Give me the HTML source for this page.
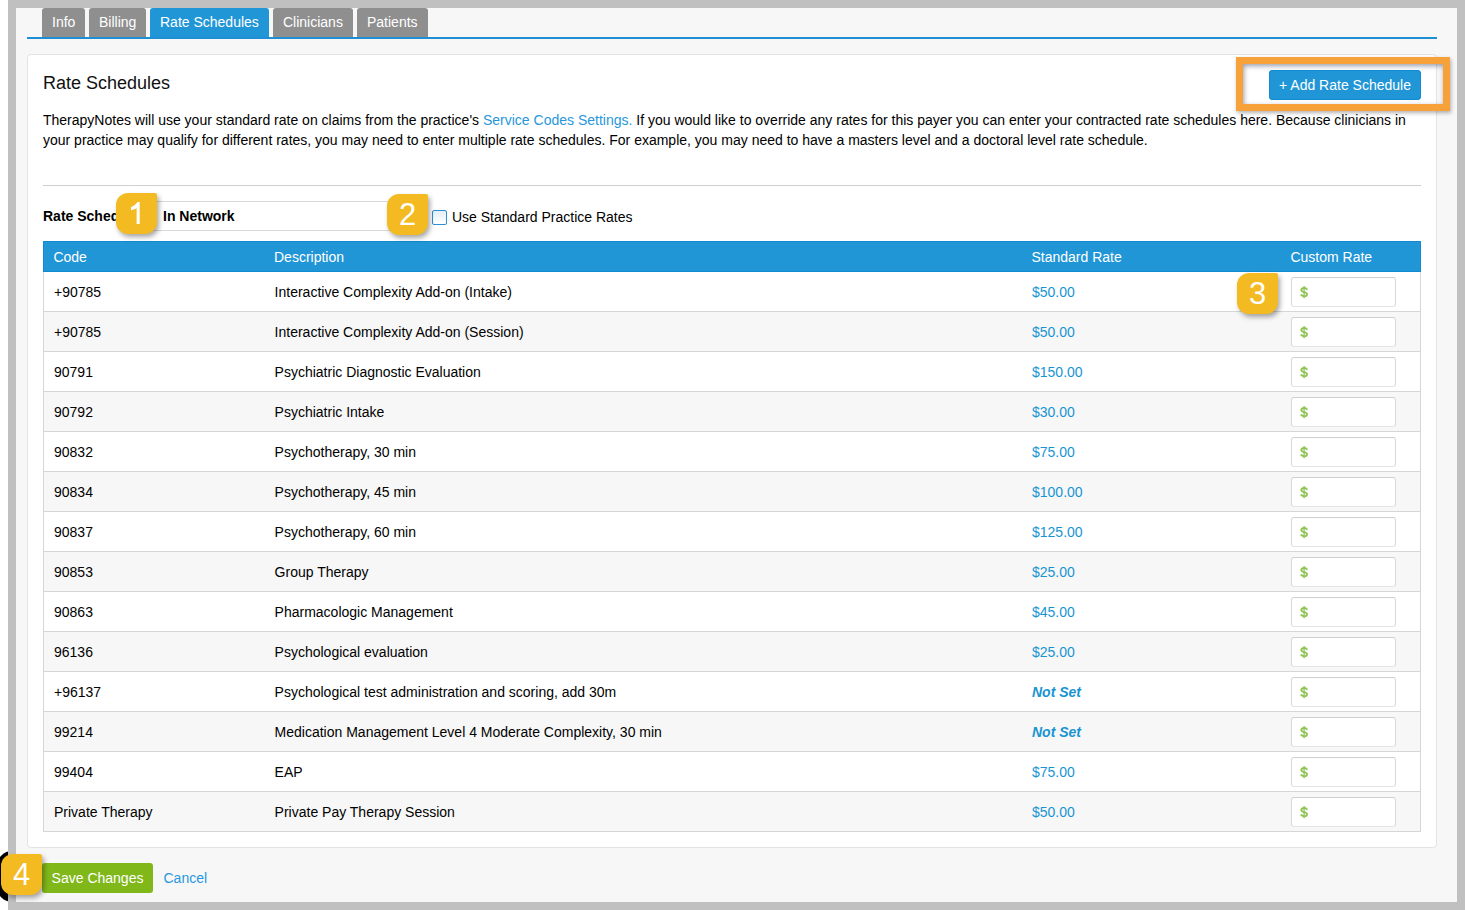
<!DOCTYPE html>
<html><head><meta charset="utf-8">
<style>
*{box-sizing:border-box;margin:0;padding:0}
html,body{width:1465px;height:910px;overflow:hidden;background:#fff;font-family:"Liberation Sans",sans-serif;font-size:14px;color:#000}
#blk{position:absolute;left:-3px;top:851px;width:48px;height:51px;background:#000;border-radius:15px}
#frame{position:absolute;left:8px;top:0;width:1457px;height:910px;background:#c0c0c0}
#page{position:absolute;left:16px;top:8px;width:1441px;height:894px;background:#f7f7f7}
.tab{position:absolute;top:8px;height:29px;line-height:28px;color:#fff;background:#8f8f8f;border-radius:3px 3px 0 0;padding:0 10px;font-size:14px;white-space:nowrap}
.tab.act{background:#2196d6}
#tabline{position:absolute;left:27px;top:37px;width:1410px;height:2px;background:#1e8fd3}
#panel{position:absolute;left:27px;top:54px;width:1410px;height:794px;background:#fff;border:1px solid #e3e3e3;border-radius:4px}
h2{position:absolute;left:43px;top:73px;font-size:18px;font-weight:normal;color:#111;line-height:20px}
#para{position:absolute;left:43px;top:110px;width:1380px;line-height:20px;font-size:14px;color:#000}
#para a{color:#2797dc;text-decoration:none}
#hr{position:absolute;left:43px;top:185px;width:1378px;height:1px;background:#cfcfcf}
#rslabel{position:absolute;left:43px;top:208px;font-weight:bold;font-size:14px;color:#000}
#rsinput{position:absolute;left:150px;top:201px;width:250px;height:30px;border:1px solid #d9d9d9;border-radius:3px;background:#fff}
#rsval{position:absolute;left:163px;top:208px;font-weight:bold;color:#000}
#chk{position:absolute;left:432px;top:210px;width:15px;height:15px;border:1px solid #2b8fd0;border-radius:2px;background:linear-gradient(#e4edf6,#fff)}
#chklbl{position:absolute;left:452px;top:209px;color:#000}
#addbtn{position:absolute;left:1269px;top:70px;width:152px;height:30px;background:#2196d6;color:#fff;border-radius:4px;text-align:center;line-height:31px;font-size:14px;box-shadow:inset 0 0 0 1px #118cd2}
#orange{position:absolute;left:1236px;top:57px;width:214px;height:54px;border:7px solid #f7a13a;box-shadow:1px 2px 4px rgba(0,0,0,.3),inset 1px 2px 5px rgba(30,40,70,.45)}
#thead{position:absolute;left:43px;top:241px;width:1378px;height:31px;background:#2196d6;border:1px solid #0e8bd2;color:#fff;line-height:30px}
.row{position:absolute;left:43px;width:1378px;height:40px;line-height:41px;box-shadow:inset 1px 0 #d6d6d6,inset -1px 0 #d6d6d6,inset 0 -1px #d6d6d6;background:#fff;color:#000}
.row.even{background:#f7f7f7}
.c1,.c2,.c3,.c4{position:absolute;top:0;white-space:nowrap}
.c1{left:11px}.c2{left:231.6px}.c3{left:989px;color:#1894d3}.c4{left:1248px}
#thead .c1{left:9.4px}#thead .c2{left:230px}#thead .c3{left:987.5px;color:#fff}#thead .c4{left:1246.4px}
.c3.ns{font-weight:bold;font-style:italic}
.ci{position:absolute;left:1248px;top:5px;width:105px;height:30px;border:1px solid;border-color:#cfcfcf #d8d8d8 #e4e4e4;border-radius:3px;background:#fff;color:#8cc152;font-weight:bold;padding-left:8px;line-height:28px}
.badge{position:absolute;width:41px;height:41px;background:#f3ba21;border-radius:12px 2px 12px 12px;color:#fff;font-size:31px;text-align:center;line-height:41px;box-shadow:2px 3px 5px rgba(0,0,0,.35)}
#save{position:absolute;left:42px;top:863px;width:111px;height:30px;background:#80b81a;color:#fff;border-radius:3px;text-align:center;line-height:31px}
#cancel{position:absolute;left:163.5px;top:870.3px;color:#2797dc}
</style></head><body>
<div id="blk"></div>
<div id="frame"></div>
<div id="page"></div>
<div class="tab" style="left:42px;width:43px">Info</div>
<div class="tab" style="left:89px;width:57px">Billing</div>
<div class="tab act" style="left:150px;width:119px">Rate Schedules</div>
<div class="tab" style="left:273px;width:80px">Clinicians</div>
<div class="tab" style="left:357px;width:71px">Patients</div>
<div id="tabline"></div>
<div id="panel"></div>
<h2>Rate Schedules</h2>
<div id="para">TherapyNotes will use your standard rate on claims from the practice's <a>Service Codes Settings.</a> If you would like to override any rates for this payer you can enter your contracted rate schedules here. Because clinicians in your practice may qualify for different rates, you may need to enter multiple rate schedules. For example, you may need to have a masters level and a doctoral level rate schedule.</div>
<div id="hr"></div>
<div id="rslabel">Rate Schedule</div>
<div id="rsinput"></div>
<div id="rsval">In Network</div>
<div id="chk"></div>
<div id="chklbl">Use Standard Practice Rates</div>
<div id="orange"></div>
<div id="addbtn">+ Add Rate Schedule</div>
<div id="thead"><span class="c1">Code</span><span class="c2">Description</span><span class="c3">Standard Rate</span><span class="c4">Custom Rate</span></div>
<div class="row odd" style="top:272px"><span class="c1">+90785</span><span class="c2">Interactive Complexity Add-on (Intake)</span><span class="c3">$50.00</span><div class="ci"><svg width="9" height="13" style="position:absolute;left:8px;top:8px"><g fill="none" stroke="#8ec455" stroke-width="1.9"><path d="M7.3 3.7 C6.6 2.5 5.5 2 4.1 2 C2.4 2 1.3 2.9 1.3 4.1 C1.3 5.4 2.4 5.8 4.1 6.2 C5.8 6.6 7 7.1 7 8.4 C7 9.6 5.8 10.2 4.1 10.2 C2.6 10.2 1.5 9.7 0.8 8.6"/><path d="M4.1 0 V12.2" stroke-width="1.3"/></g></svg></div></div>
<div class="row even" style="top:312px"><span class="c1">+90785</span><span class="c2">Interactive Complexity Add-on (Session)</span><span class="c3">$50.00</span><div class="ci"><svg width="9" height="13" style="position:absolute;left:8px;top:8px"><g fill="none" stroke="#8ec455" stroke-width="1.9"><path d="M7.3 3.7 C6.6 2.5 5.5 2 4.1 2 C2.4 2 1.3 2.9 1.3 4.1 C1.3 5.4 2.4 5.8 4.1 6.2 C5.8 6.6 7 7.1 7 8.4 C7 9.6 5.8 10.2 4.1 10.2 C2.6 10.2 1.5 9.7 0.8 8.6"/><path d="M4.1 0 V12.2" stroke-width="1.3"/></g></svg></div></div>
<div class="row odd" style="top:352px"><span class="c1">90791</span><span class="c2">Psychiatric Diagnostic Evaluation</span><span class="c3">$150.00</span><div class="ci"><svg width="9" height="13" style="position:absolute;left:8px;top:8px"><g fill="none" stroke="#8ec455" stroke-width="1.9"><path d="M7.3 3.7 C6.6 2.5 5.5 2 4.1 2 C2.4 2 1.3 2.9 1.3 4.1 C1.3 5.4 2.4 5.8 4.1 6.2 C5.8 6.6 7 7.1 7 8.4 C7 9.6 5.8 10.2 4.1 10.2 C2.6 10.2 1.5 9.7 0.8 8.6"/><path d="M4.1 0 V12.2" stroke-width="1.3"/></g></svg></div></div>
<div class="row even" style="top:392px"><span class="c1">90792</span><span class="c2">Psychiatric Intake</span><span class="c3">$30.00</span><div class="ci"><svg width="9" height="13" style="position:absolute;left:8px;top:8px"><g fill="none" stroke="#8ec455" stroke-width="1.9"><path d="M7.3 3.7 C6.6 2.5 5.5 2 4.1 2 C2.4 2 1.3 2.9 1.3 4.1 C1.3 5.4 2.4 5.8 4.1 6.2 C5.8 6.6 7 7.1 7 8.4 C7 9.6 5.8 10.2 4.1 10.2 C2.6 10.2 1.5 9.7 0.8 8.6"/><path d="M4.1 0 V12.2" stroke-width="1.3"/></g></svg></div></div>
<div class="row odd" style="top:432px"><span class="c1">90832</span><span class="c2">Psychotherapy, 30 min</span><span class="c3">$75.00</span><div class="ci"><svg width="9" height="13" style="position:absolute;left:8px;top:8px"><g fill="none" stroke="#8ec455" stroke-width="1.9"><path d="M7.3 3.7 C6.6 2.5 5.5 2 4.1 2 C2.4 2 1.3 2.9 1.3 4.1 C1.3 5.4 2.4 5.8 4.1 6.2 C5.8 6.6 7 7.1 7 8.4 C7 9.6 5.8 10.2 4.1 10.2 C2.6 10.2 1.5 9.7 0.8 8.6"/><path d="M4.1 0 V12.2" stroke-width="1.3"/></g></svg></div></div>
<div class="row even" style="top:472px"><span class="c1">90834</span><span class="c2">Psychotherapy, 45 min</span><span class="c3">$100.00</span><div class="ci"><svg width="9" height="13" style="position:absolute;left:8px;top:8px"><g fill="none" stroke="#8ec455" stroke-width="1.9"><path d="M7.3 3.7 C6.6 2.5 5.5 2 4.1 2 C2.4 2 1.3 2.9 1.3 4.1 C1.3 5.4 2.4 5.8 4.1 6.2 C5.8 6.6 7 7.1 7 8.4 C7 9.6 5.8 10.2 4.1 10.2 C2.6 10.2 1.5 9.7 0.8 8.6"/><path d="M4.1 0 V12.2" stroke-width="1.3"/></g></svg></div></div>
<div class="row odd" style="top:512px"><span class="c1">90837</span><span class="c2">Psychotherapy, 60 min</span><span class="c3">$125.00</span><div class="ci"><svg width="9" height="13" style="position:absolute;left:8px;top:8px"><g fill="none" stroke="#8ec455" stroke-width="1.9"><path d="M7.3 3.7 C6.6 2.5 5.5 2 4.1 2 C2.4 2 1.3 2.9 1.3 4.1 C1.3 5.4 2.4 5.8 4.1 6.2 C5.8 6.6 7 7.1 7 8.4 C7 9.6 5.8 10.2 4.1 10.2 C2.6 10.2 1.5 9.7 0.8 8.6"/><path d="M4.1 0 V12.2" stroke-width="1.3"/></g></svg></div></div>
<div class="row even" style="top:552px"><span class="c1">90853</span><span class="c2">Group Therapy</span><span class="c3">$25.00</span><div class="ci"><svg width="9" height="13" style="position:absolute;left:8px;top:8px"><g fill="none" stroke="#8ec455" stroke-width="1.9"><path d="M7.3 3.7 C6.6 2.5 5.5 2 4.1 2 C2.4 2 1.3 2.9 1.3 4.1 C1.3 5.4 2.4 5.8 4.1 6.2 C5.8 6.6 7 7.1 7 8.4 C7 9.6 5.8 10.2 4.1 10.2 C2.6 10.2 1.5 9.7 0.8 8.6"/><path d="M4.1 0 V12.2" stroke-width="1.3"/></g></svg></div></div>
<div class="row odd" style="top:592px"><span class="c1">90863</span><span class="c2">Pharmacologic Management</span><span class="c3">$45.00</span><div class="ci"><svg width="9" height="13" style="position:absolute;left:8px;top:8px"><g fill="none" stroke="#8ec455" stroke-width="1.9"><path d="M7.3 3.7 C6.6 2.5 5.5 2 4.1 2 C2.4 2 1.3 2.9 1.3 4.1 C1.3 5.4 2.4 5.8 4.1 6.2 C5.8 6.6 7 7.1 7 8.4 C7 9.6 5.8 10.2 4.1 10.2 C2.6 10.2 1.5 9.7 0.8 8.6"/><path d="M4.1 0 V12.2" stroke-width="1.3"/></g></svg></div></div>
<div class="row even" style="top:632px"><span class="c1">96136</span><span class="c2">Psychological evaluation</span><span class="c3">$25.00</span><div class="ci"><svg width="9" height="13" style="position:absolute;left:8px;top:8px"><g fill="none" stroke="#8ec455" stroke-width="1.9"><path d="M7.3 3.7 C6.6 2.5 5.5 2 4.1 2 C2.4 2 1.3 2.9 1.3 4.1 C1.3 5.4 2.4 5.8 4.1 6.2 C5.8 6.6 7 7.1 7 8.4 C7 9.6 5.8 10.2 4.1 10.2 C2.6 10.2 1.5 9.7 0.8 8.6"/><path d="M4.1 0 V12.2" stroke-width="1.3"/></g></svg></div></div>
<div class="row odd" style="top:672px"><span class="c1">+96137</span><span class="c2">Psychological test administration and scoring, add 30m</span><span class="c3 ns">Not Set</span><div class="ci"><svg width="9" height="13" style="position:absolute;left:8px;top:8px"><g fill="none" stroke="#8ec455" stroke-width="1.9"><path d="M7.3 3.7 C6.6 2.5 5.5 2 4.1 2 C2.4 2 1.3 2.9 1.3 4.1 C1.3 5.4 2.4 5.8 4.1 6.2 C5.8 6.6 7 7.1 7 8.4 C7 9.6 5.8 10.2 4.1 10.2 C2.6 10.2 1.5 9.7 0.8 8.6"/><path d="M4.1 0 V12.2" stroke-width="1.3"/></g></svg></div></div>
<div class="row even" style="top:712px"><span class="c1">99214</span><span class="c2">Medication Management Level 4 Moderate Complexity, 30 min</span><span class="c3 ns">Not Set</span><div class="ci"><svg width="9" height="13" style="position:absolute;left:8px;top:8px"><g fill="none" stroke="#8ec455" stroke-width="1.9"><path d="M7.3 3.7 C6.6 2.5 5.5 2 4.1 2 C2.4 2 1.3 2.9 1.3 4.1 C1.3 5.4 2.4 5.8 4.1 6.2 C5.8 6.6 7 7.1 7 8.4 C7 9.6 5.8 10.2 4.1 10.2 C2.6 10.2 1.5 9.7 0.8 8.6"/><path d="M4.1 0 V12.2" stroke-width="1.3"/></g></svg></div></div>
<div class="row odd" style="top:752px"><span class="c1">99404</span><span class="c2">EAP</span><span class="c3">$75.00</span><div class="ci"><svg width="9" height="13" style="position:absolute;left:8px;top:8px"><g fill="none" stroke="#8ec455" stroke-width="1.9"><path d="M7.3 3.7 C6.6 2.5 5.5 2 4.1 2 C2.4 2 1.3 2.9 1.3 4.1 C1.3 5.4 2.4 5.8 4.1 6.2 C5.8 6.6 7 7.1 7 8.4 C7 9.6 5.8 10.2 4.1 10.2 C2.6 10.2 1.5 9.7 0.8 8.6"/><path d="M4.1 0 V12.2" stroke-width="1.3"/></g></svg></div></div>
<div class="row even" style="top:792px"><span class="c1">Private Therapy</span><span class="c2">Private Pay Therapy Session</span><span class="c3">$50.00</span><div class="ci"><svg width="9" height="13" style="position:absolute;left:8px;top:8px"><g fill="none" stroke="#8ec455" stroke-width="1.9"><path d="M7.3 3.7 C6.6 2.5 5.5 2 4.1 2 C2.4 2 1.3 2.9 1.3 4.1 C1.3 5.4 2.4 5.8 4.1 6.2 C5.8 6.6 7 7.1 7 8.4 C7 9.6 5.8 10.2 4.1 10.2 C2.6 10.2 1.5 9.7 0.8 8.6"/><path d="M4.1 0 V12.2" stroke-width="1.3"/></g></svg></div></div>
<div class="badge" style="left:116px;top:193px"><svg width="41" height="41" style="position:absolute;left:0;top:0"><path d="M23.7 9 L23.7 31 L20.6 31 L20.6 15.2 Q17.8 16.8 15 17.3 L15 14.2 Q19 12.6 21.6 9 Z" fill="#fff"/></svg></div>
<div class="badge" style="left:387px;top:194px">2</div>
<div class="badge" style="left:1237px;top:273px">3</div>
<div id="save">Save Changes</div>
<div id="cancel">Cancel</div>
<div class="badge" style="left:1px;top:854px">4</div>
</body></html>
